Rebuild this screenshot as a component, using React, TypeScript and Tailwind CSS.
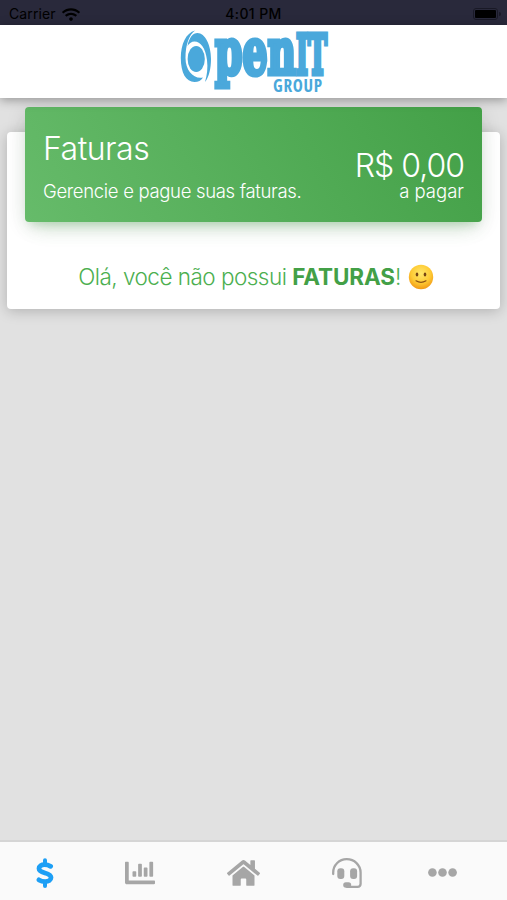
import React from "react";
import { FaChartBar, FaHome, FaWifi } from "react-icons/fa";

function DollarIcon() {
  return (
    <svg viewBox="0 0 18 30" className="h-[30px] w-[18px]" fill="none" stroke="currentColor" strokeLinecap="round">
      <path
        d="M14.600 8.300C12.500 7.100 10.500 6.700 8.500 6.700 5.300 6.700 3 8.200 3 10.600c0 5.400 12 3.400 12 9 0 2.600-2.500 4-5.800 4-2.400 0-4.500-.6-6.200-1.700"
        strokeWidth="4.800"
      />
      <path d="M9 2.200v4M9 24v4" strokeWidth="4" />
    </svg>
  );
}

function HeadsetIcon() {
  return (
    <svg viewBox="0 0 30 30" className="h-[30px] w-[30px]" fill="none">
      <path
        d="M1.2 16V14.6a13.4 13.4 0 0 1 13.6-13.4c7.6 0 13.8 5.8 13.8 13.4v11.2q0 3-3 3H15"
        stroke="currentColor"
        strokeWidth="2.3"
        strokeLinecap="round"
      />
      <rect x="5.3" y="10.3" width="7" height="10.8" rx="3" fill="currentColor" />
      <rect x="18.1" y="10.3" width="7" height="10.8" rx="3" fill="currentColor" />
      <rect x="11.2" y="24.3" width="8" height="5.5" rx="2.7" fill="currentColor" />
    </svg>
  );
}

function DotsIcon() {
  return (
    <svg viewBox="0 0 29 9" className="h-[9px] w-[29px]" fill="currentColor">
      <circle cx="4.4" cy="4.5" r="4.3" />
      <circle cx="14.5" cy="4.5" r="4.3" />
      <circle cx="24.6" cy="4.5" r="4.3" />
    </svg>
  );
}

const tabs = [
  { title: "Faturas", icon: <DollarIcon />, active: true },
  { title: "Consumo", icon: <FaChartBar className="h-[30px] w-[30px]" /> },
  { title: "Home", icon: <FaHome className="h-[32px] w-[33px]" /> },
  { title: "Suporte", icon: <HeadsetIcon /> },
  { title: "Mais", icon: <DotsIcon /> },
];

function StatusBar() {
  return (
    <div className="grid h-[25px] grid-cols-3 items-center bg-[#29293b] pt-[3px] text-[14px] leading-none text-black">
      <div className="flex items-center gap-[6px] pl-[9px]">
        <span className="tracking-[0.1px]">Carrier</span>
        <FaWifi className="h-[15px] w-[18px]" />
      </div>
      <span className="text-center font-medium tracking-[0.4px]">4:01 PM</span>
      <div className="flex items-center justify-end gap-px pr-[6px]">
        <div className="h-[12px] w-[25px] rounded-[3px] border border-[#191926] p-px">
          <div className="h-full w-full rounded-[1px] bg-black" />
        </div>
        <div className="h-1 w-[2px] rounded-r bg-[#191926]" />
      </div>
    </div>
  );
}

function Logo() {
  return (
    <svg viewBox="0 0 150 70" className="h-[70px] w-[150px] overflow-visible" fill="#4aa8db">
      <ellipse cx="16.200" cy="33" rx="8.600" ry="13" />
      <path d="M15 4.500C6 7 .8 18 .8 32 .8 47 6 56 14.500 56c4 0 6.500-1.500 8.500-4.500C14 53.500 5.500 45 5.500 32 5.500 19 9 9 15 4.500Z" />
      <path d="M7.500 20C9 11.500 13 7 17.500 7 25 7 31 19 31 33c0 9-2 18-6 23 2-7 3-14 2-22-1.500-12-6.500-18.500-12.500-18.500-3 0-5 1.500-7 4.500Z" />
      <g fontFamily="'DejaVu Serif', serif" fontWeight="700" stroke="#4aa8db" strokeWidth="5">
        <text x="35" y="47.500" fontSize="63" textLength="81" lengthAdjust="spacingAndGlyphs">
          pen
        </text>
        <text x="116" y="47.500" fontSize="54" textLength="31" lengthAdjust="spacingAndGlyphs">
          IT
        </text>
      </g>
      <text
        x="93"
        y="66"
        fontFamily="'Open Sans', sans-serif"
        fontSize="17"
        fontWeight="700"
        textLength="49"
        lengthAdjust="spacing"
        className="[font-stretch:75%]"
      >
        GROUP
      </text>
    </svg>
  );
}

function SmileIcon() {
  return (
    <svg viewBox="0 0 26 26" className="h-[26px] w-[26px]">
      <defs>
        <radialGradient id="face" cx="50%" cy="35%" r="65%">
          <stop offset="0" stopColor="#ffe76b" />
          <stop offset="0.6" stopColor="#fecb35" />
          <stop offset="1" stopColor="#f29a16" />
        </radialGradient>
      </defs>
      <circle cx="13" cy="13" r="12.200" fill="url(#face)" />
      <ellipse cx="9" cy="10.500" rx="1.300" ry="2" fill="#774513" />
      <ellipse cx="17" cy="10.500" rx="1.300" ry="2" fill="#774513" />
      <path d="M8 16.800q5 3.200 10 0" stroke="#8b5014" strokeWidth="1.200" strokeLinecap="round" fill="none" />
    </svg>
  );
}

function App() {
  return (
    <div className="flex h-[900px] w-[507px] flex-col overflow-hidden bg-[#e1e1e1] font-['Inter',sans-serif]">
      <StatusBar />
      <header className="z-10 flex h-[73px] justify-center bg-white pt-px pl-[3px] shadow-[0_2px_10px_rgba(0,0,0,0.35)]">
        <Logo />
      </header>

      <main className="flex-1 px-[7px] pt-[34px]">
        <section className="flex h-[177px] flex-col rounded-[4px] bg-white px-[18px] shadow-[0_2px_14px_rgba(0,0,0,0.22)]">
          <div className="-mt-[25px] flex h-[115px] shrink-0 justify-between rounded-[4px] bg-linear-[60deg,#66bb6a,#43a047] px-[18px] font-light text-white shadow-[0_12px_20px_-10px_rgba(76,175,80,0.28),0_4px_20px_rgba(0,0,0,0.12),0_7px_8px_-5px_rgba(76,175,80,0.2)]">
            <div className="pt-[22px]">
              <h1 className="text-[32px] leading-[40px] tracking-[-0.5px]">Faturas</h1>
              <p className="mt-[10px] text-[18.500px] leading-[24px] tracking-[-0.320px]">
                Gerencie e pague suas faturas.
              </p>
            </div>
            <div className="pt-[41px] text-right">
              <p className="text-[32px] leading-[36px] tracking-[-1px]">R$ 0,00</p>
              <p className="-mt-[5px] text-[18.500px] leading-[24px]">a pagar</p>
            </div>
          </div>
          <div className="mt-[40px] flex items-center justify-center pl-[5px] text-[22.500px] leading-[30px] font-light tracking-[-0.520px] whitespace-nowrap text-[#4caf50]">
            <span>
              Olá, você não possui <b className="font-bold tracking-[-0.1px] text-[#43a047]">FATURAS</b>!
            </span>
            <span className="ml-[7px]">
              <SmileIcon />
            </span>
          </div>
        </section>
      </main>

      <nav className="grid h-[60px] grid-cols-[90px_100px_106px_102px_88px] items-center border-t-2 border-[#d5d5d5] bg-[#fafafa] pt-[3px]">
        {tabs.map((tab) => (
          <a
            key={tab.title}
            aria-label={tab.title}
            className={tab.active ? "flex justify-center text-[#1d9ff5]" : "flex justify-center text-[#a6a6a6]"}
          >
            {tab.icon}
          </a>
        ))}
      </nav>
    </div>
  );
}

export default App;
